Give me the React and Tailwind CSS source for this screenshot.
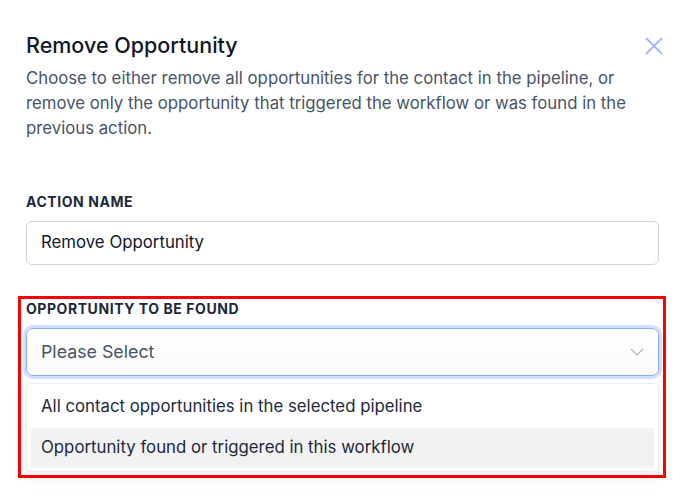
import React from 'react';

const options = [
  'All contact opportunities in the selected pipeline',
  'Opportunity found or triggered in this workflow',
];

const RemoveOpportunity = () => {
  return (
    <div className="min-h-[504px] w-[686px] bg-white font-['Inter',sans-serif] px-[26px] pt-[30px]">
      <div className="flex items-start justify-between">
        <h2 className="text-[21.5px] leading-[30px] font-medium text-[#101828]">Remove Opportunity</h2>
        <button className="mt-[7px] mr-[-3px] text-[#a5b4fc]">
          <svg width="18" height="18" viewBox="0 0 18 18" fill="none" stroke="currentColor" strokeWidth="1.8" strokeLinecap="round">
            <path d="M1.5 1.5 L16.5 16.5 M16.5 1.5 L1.5 16.5" />
          </svg>
        </button>
      </div>
      <p className="mt-[6px] text-[16.75px] leading-[25px] text-[#475467] pr-[10px]">
        Choose to either remove all opportunities for the contact in the pipeline, or remove only the opportunity that triggered the workflow or was found in the previous action.
      </p>

      <div className="mt-[51px]">
        <label className="block text-[14px] leading-[20px] font-bold tracking-[0.04em] text-[#1d2939]">ACTION NAME</label>
        <div className="mt-[9px] h-[44px] w-[633px] rounded-[6px] border border-[#d0d5dd] flex items-center px-[14px] text-[16.8px] text-[#101828]">
          Remove Opportunity
        </div>
      </div>

      <div className="mt-[31px] -mx-[8px] w-[648px] border-[3px] border-[#ff0000] px-[5px] pt-0 pb-[3px]">
        <label className="block text-[14px] leading-[20px] font-bold tracking-[0.04em] text-[#1d2939]">OPPORTUNITY TO BE FOUND</label>
        <div className="mt-[9px] h-[48px] w-[633px] rounded-[7px] border border-[#84adff] ring-[3px] ring-[#d1e0ff] bg-gradient-to-b from-white to-[#fafafa] flex items-center justify-between px-[14px]">
          <span className="text-[17.8px] text-[#475467]">Please Select</span>
          <svg width="14" height="8" viewBox="0 0 14 8" fill="none" stroke="#b0b6c0" strokeWidth="1.2">
            <path d="M1 1 L7 7 L13 1" />
          </svg>
        </div>
        <div className="mt-[7px] w-[633px] rounded-[4px] border border-[#eaecf0] bg-white shadow-[0_6px_16px_rgba(16,24,40,0.08)] pt-[3px] px-[4px] pb-[3px] flex flex-col gap-[1px]">
          {options.map((opt, i) => (
            <div
              key={opt}
              className={`h-[40px] flex items-center px-[10px] rounded-[3px] text-[16.8px] text-[#1d2939] ${i === 1 ? 'bg-[#f2f2f4]' : ''}`}
            >
              {opt}
            </div>
          ))}
        </div>
      </div>
    </div>
  );
};

export default function App() {
  return <RemoveOpportunity />;
}
